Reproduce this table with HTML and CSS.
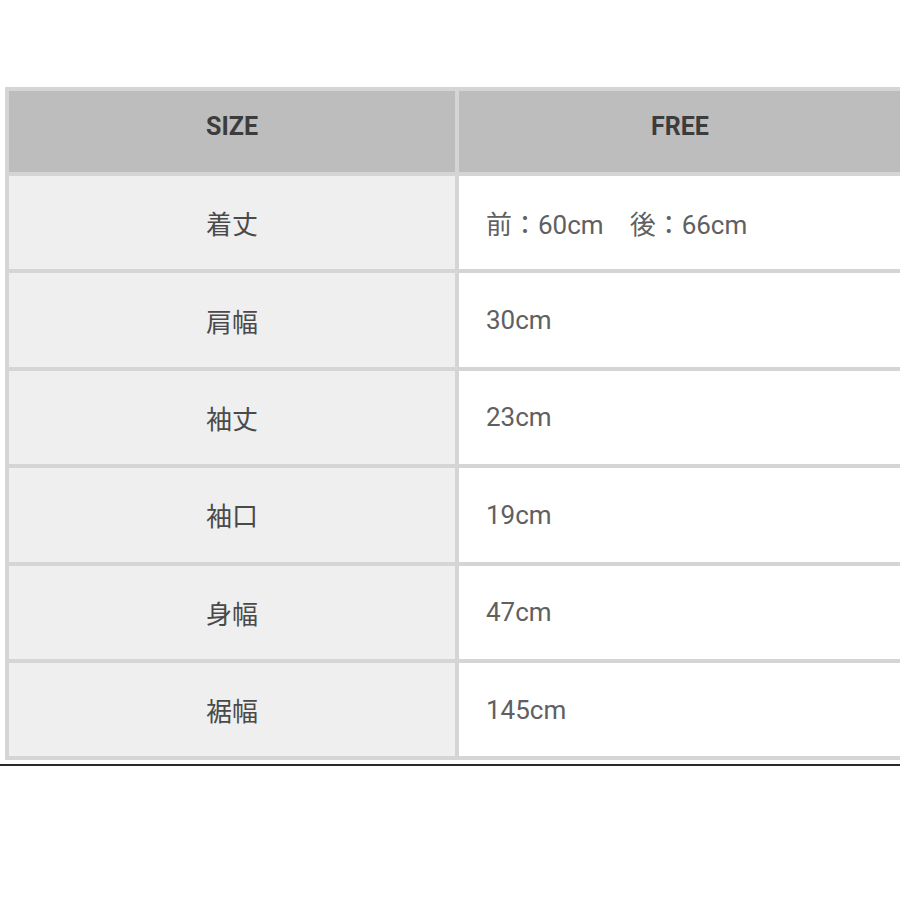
FILE: index.html
```html
<!DOCTYPE html>
<html lang="ja">
<head>
<meta charset="utf-8">
<title>サイズ表</title>
<link rel="stylesheet" href="styles.css">
</head>
<body>
<div class="sheet">
  <table class="size-table">
    <thead>
      <tr>
        <th class="label">SIZE</th>
        <th class="value">FREE</th>
      </tr>
    </thead>
    <tbody>
      <tr><td class="label">着丈</td><td class="value">前：60cm　後：66cm</td></tr>
      <tr><td class="label">肩幅</td><td class="value">30cm</td></tr>
      <tr><td class="label">袖丈</td><td class="value">23cm</td></tr>
      <tr><td class="label">袖口</td><td class="value">19cm</td></tr>
      <tr><td class="label">身幅</td><td class="value">47cm</td></tr>
      <tr><td class="label">裾幅</td><td class="value">145cm</td></tr>
    </tbody>
  </table>
  <div class="rule"></div>
</div>
</body>
</html>
```
FILE: styles.css
```css
html, body {
  margin: 0;
  padding: 0;
  background: #ffffff;
  overflow: hidden;
}

.sheet {
  width: 900px;
  height: 900px;
  padding-top: 87px;
  box-sizing: border-box;
  font-family: Roboto, "Noto Sans CJK JP", sans-serif;
}

.size-table {
  margin-left: 5px;
  width: 900px;
  border-collapse: collapse;
  table-layout: fixed;
}

.size-table th,
.size-table td {
  border: 4px solid #d5d5d5;
  padding: 0;
}

.size-table th {
  background: #bdbdbd;
  color: #3c3c3c;
  font-weight: 700;
  font-size: 25px;
  height: 71px;
  padding-bottom: 10px;
  text-align: center;
  vertical-align: middle;
}

.size-table th.label {
  width: 446px;
}

.size-table td {
  height: 93.4px;
  font-size: 26px;
  color: #555555;
  vertical-align: middle;
}

.size-table td.label {
  background: #efefef;
  color: #4a4a4a;
  text-align: center;
  font-size: 26px;
}

.size-table td.value {
  background: #ffffff;
  color: #606060;
  text-align: left;
  padding-left: 27px;
}

.rule {
  margin-top: 4px;
  height: 2px;
  background: #2a2a2a;
}
```
